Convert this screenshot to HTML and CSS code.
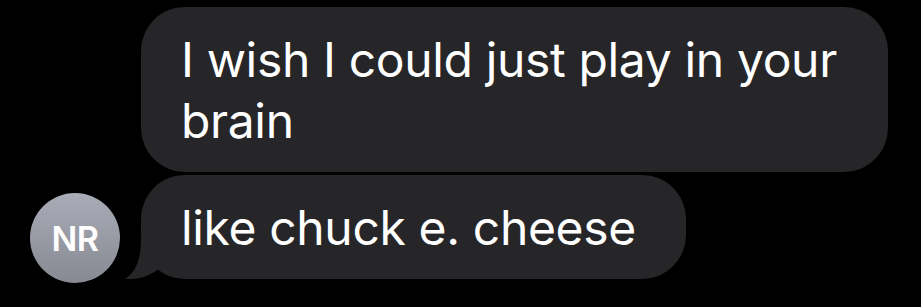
FILE: index.html
```html
<!DOCTYPE html>
<html>
<head>
<meta charset="utf-8">
<link rel="stylesheet" href="styles.css">
</head>
<body>
<div class="thread">
  <div class="row row-first">
    <div class="bubble bubble-wide">I wish I could just play in your brain</div>
  </div>
  <div class="row">
    <div class="avatar">NR</div>
    <div class="bubble bubble-tail">like chuck e. cheese
      <svg class="tail" width="40" height="40" viewBox="0 0 40 40"><path d="M17 0 C17 20 12 33 1 40 C12 41 25 38 36 29 L40 0 Z" fill="#262629"/></svg>
    </div>
  </div>
</div>
</body>
</html>
```
FILE: styles.css
```css
html, body {
  margin: 0;
  padding: 0;
  background: #000;
}
body {
  width: 921px;
  height: 307px;
  overflow: hidden;
  font-family: Inter, "Noto Sans", sans-serif;
}
.thread {
  display: flex;
  flex-direction: column;
  gap: 3px;
  padding: 7px 0 0 30px;
}
.row {
  display: flex;
  align-items: flex-end;
  gap: 21px;
}
.row-first {
  padding-left: 111px;
}
.bubble {
  position: relative;
  background: #262629;
  color: #fff;
  font-size: 48px;
  letter-spacing: -0.35px;
  line-height: 61px;
  padding: 22px 50px 21px 40px;
  border-radius: 44px;
  box-sizing: border-box;
}
.bubble-wide {
  width: 747px;
  padding-right: 24px;
}
.avatar {
  width: 90px;
  height: 90px;
  border-radius: 50%;
  background: linear-gradient(#a9acb6, #878a93);
  color: #fff;
  font-weight: 600;
  font-size: 34px;
  display: flex;
  align-items: center;
  justify-content: center;
  margin-bottom: -4px;
  letter-spacing: -0.5px;
}
.tail {
  position: absolute;
  left: -17px;
  bottom: 0;
}
```
